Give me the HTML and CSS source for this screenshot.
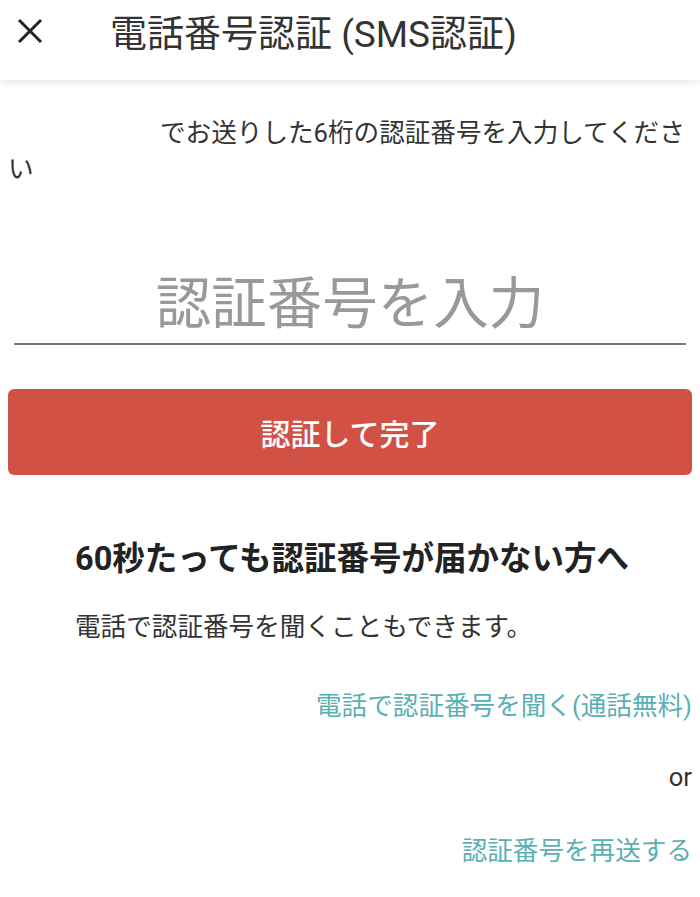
FILE: index.html
```html
<!DOCTYPE html>
<html lang="ja">
<head>
<meta charset="utf-8">
<title>電話番号認証 (SMS認証)</title>
<link rel="stylesheet" href="styles.css">
</head>
<body>
<header class="topbar">
  <button class="close" aria-label="閉じる">
    <svg width="26" height="26" viewBox="0 0 26 26"><path d="M2 2 L24 24 M24 2 L2 24" stroke="#222" stroke-width="3" fill="none"/></svg>
  </button>
  <h1 class="title">電話番号認証 (SMS認証)</h1>
</header>
<main class="content">
  <p class="notice"><span class="phone"></span>でお送りした6桁の認証番号を入力してください</p>
  <input class="code" type="text" placeholder="認証番号を入力">
  <button class="submit">認証して完了</button>
  <section class="help">
    <h2 class="help-title">60秒たっても認証番号が届かない方へ</h2>
    <p class="help-text">電話で認証番号を聞くこともできます。</p>
  </section>
  <div class="actions">
    <a class="link call">電話で認証番号を聞く(通話無料)</a>
    <span class="or">or</span>
    <a class="link resend">認証番号を再送する</a>
  </div>
</main>
</body>
</html>
```
FILE: styles.css
```css
* { box-sizing: border-box; }
html, body { margin: 0; padding: 0; background: #fff; }
body {
  font-family: Roboto, "Noto Sans CJK JP", sans-serif;
  color: #333;
  width: 700px;
  overflow: hidden;
}
.topbar {
  height: 80px;
  padding-bottom: 10px;
  display: flex;
  align-items: center;
  box-shadow: 0 2px 8px rgba(0,0,0,0.10);
  position: relative;
}
.close {
  border: none;
  background: none;
  padding: 0;
  margin-left: 17px;
  width: 26px;
  height: 26px;
  display: flex;
  margin-top: -8px;
}
.title {
  margin: 0 0 0 67px;
  font-size: 37px;
  font-weight: 400;
  color: #333;
  line-height: 44px;
}
.content { padding: 0 8px; }
.notice {
  margin: 35px 0 0;
  font-size: 25.6px;
  line-height: 36px;
  color: #333;
}
.phone { display: inline-block; width: 152px; }
.code {
  display: block;
  margin: 78px 6px 0;
  width: calc(100% - 12px);
  height: 80px;
  border: none;
  border-bottom: 2px solid #777;
  font-family: Roboto, "Noto Sans CJK JP", sans-serif;
  font-size: 55.5px;
  text-align: center;
  outline: none;
  padding: 0;
  color: #333;
}
.code::placeholder { color: #999; }
.submit {
  display: block;
  width: 100%;
  margin-top: 44px;
  height: 86px;
  border: none;
  border-radius: 6px;
  background: #d15245;
  color: #fff;
  font-family: Roboto, "Noto Sans CJK JP", sans-serif;
  font-size: 30px;
  font-weight: 500;
}
.help { padding-left: 67px; }
.help-title {
  margin: 62px 0 0;
  font-size: 32.5px;
  line-height: 44px;
  font-weight: 700;
  color: #222;
}
.help-text {
  margin: 28px 0 0;
  font-size: 25.6px;
  line-height: 36px;
  color: #333;
}
.actions {
  display: flex;
  flex-direction: column;
  align-items: flex-end;
}
.link {
  color: #5aafb4;
  font-size: 25.6px;
  line-height: 36px;
}
.call { margin-top: 43px; }
.or {
  margin-top: 35px;
  font-size: 25.6px;
  line-height: 36px;
  color: #333;
}
.resend { margin-top: 38px; }
```
